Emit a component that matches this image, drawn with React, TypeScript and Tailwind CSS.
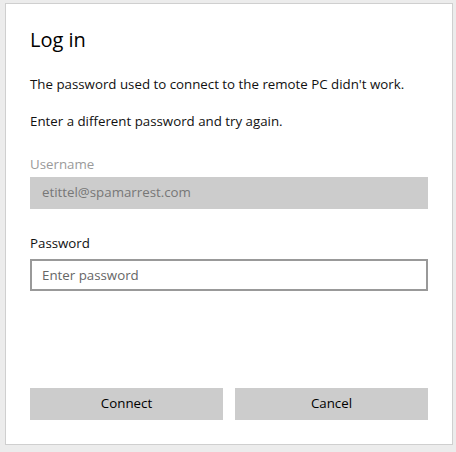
export default function App() {
  return (
    <div className="w-[456px] h-[452px] bg-[#ececec] pt-[3px] pl-[5px]" style={{ fontFamily: '"Open Sans", "Noto Sans", sans-serif' }}>
      <div className="w-[448px] h-[442px] bg-white border border-[#cfcfcf] px-6 flex flex-col">
        {/* Title */}
        <h1 className="mt-[22px] text-[20px] leading-[28px] text-black">Log in</h1>

        <p className="mt-[21px] text-[13.3px] leading-[18px] text-[#111]">
          The password used to connect to the remote PC didn't work.
        </p>
        <p className="mt-[19px] text-[13.3px] leading-[18px] text-[#111]">
          Enter a different password and try again.
        </p>

        {/* Username */}
        <label className="mt-[25px] text-[13.3px] leading-[18px] text-[#9a9a9a]">Username</label>
        <div className="mt-[4px] h-8 w-[398px] bg-[#cccccc] px-3 flex items-center text-[13.3px] text-[#777]">
          etittel@spamarrest.com
        </div>

        {/* Password */}
        <label className="mt-[25px] text-[13.3px] leading-[18px] text-[#111]">Password</label>
        <input
          type="password"
          placeholder="Enter password"
          className="mt-[7px] h-8 w-[398px] border-2 border-[#999] px-[10px] text-[13.3px] outline-none placeholder:text-[#666]"
        />

        {/* Buttons */}
        <div className="mt-auto mb-[24px] flex gap-3 w-[398px]">
          <button className="flex-1 h-8 bg-[#cccccc] text-[13.3px] text-black">Connect</button>
          <button className="flex-1 h-8 bg-[#cccccc] text-[13.3px] text-black">Cancel</button>
        </div>
      </div>
    </div>
  )
}
